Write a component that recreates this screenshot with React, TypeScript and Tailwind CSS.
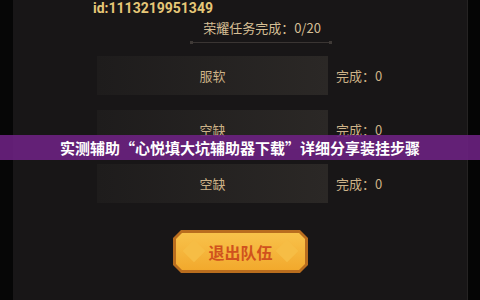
import React from "react";

const font = { fontFamily: '"Noto Sans CJK SC", "Noto Sans", sans-serif' };

function Row({ label, top }: { label: string; top: string }) {
  return (
    <div className={`flex items-center ${top}`}>
      <div className="ml-[84px] w-[231px] h-[39px] flex items-center justify-center bg-gradient-to-r from-[#1e1c1c] to-[#2b2826] text-[13px] text-[#cdb287] leading-none">
        {label}
      </div>
      <div className="ml-[8px] text-[13px] text-[#cdb287] leading-none">完成：0</div>
    </div>
  );
}

export default function App() {
  return (
    <div className="relative w-[480px] h-[300px] flex bg-black overflow-hidden" style={font}>
      <div className="w-[13px] h-full bg-[#060606]" />
      <div className="w-[455px] h-full bg-[#181617] flex flex-col border-r border-[#252323]">
        <div
          className="ml-[80px] h-[16px] leading-[16px] text-[14px] font-bold text-[#e6c777]"
          style={{ fontFamily: 'Roboto, "Liberation Sans", sans-serif' }}
        >
          id:1113219951349
        </div>
        <div className="ml-[177px] w-[142px] flex flex-col items-center mt-[4px]">
          <div className="text-[13px] leading-[16px] text-[#d6bf95] pl-[2px]">荣耀任务完成：0/20</div>
          <div className="relative mt-[6px] w-full h-[1px] bg-[#3a3533]">
            <div className="absolute left-0 top-[-1px] w-[3px] h-[3px] bg-[#3f3a37]" />
            <div className="absolute right-0 top-[-1px] w-[3px] h-[3px] bg-[#3f3a37]" />
          </div>
        </div>
        <Row label="服软" top="mt-[13px]" />
        <Row label="空缺" top="mt-[15px]" />
        <Row label="空缺" top="mt-[15px]" />
        <div className="ml-[160px] mt-[27px] w-[135px] h-[43px] bg-[#b96d1e] [clip-path:polygon(8px_0,calc(100%-8px)_0,100%_8px,100%_calc(100%-8px),calc(100%-8px)_100%,8px_100%,0_calc(100%-8px),0_8px)] p-[3px]">
          <div className="w-full h-full bg-gradient-to-b from-[#f8c24a] to-[#f2a92c] [clip-path:polygon(6px_0,calc(100%-6px)_0,100%_6px,100%_calc(100%-6px),calc(100%-6px)_100%,6px_100%,0_calc(100%-6px),0_6px)] flex items-center justify-center relative">
            <div className="absolute left-[10px] top-[10px] w-[16px] h-[16px] rotate-45 bg-[#f6bd45]" />
            <div className="absolute right-[10px] top-[10px] w-[16px] h-[16px] rotate-45 bg-[#f6bd45]" />
            <span className="relative text-[16px] font-bold text-[#d0521d] leading-none">退出队伍</span>
          </div>
        </div>
      </div>
      <div className="w-[12px] h-full bg-[#050505]" />
      <div className="absolute left-0 top-[135px] w-[480px] h-[25px] bg-[#6c2181]/90 flex items-center justify-center">
        <span className="text-[15px] font-bold text-white leading-none">
          实测辅助“心悦填大坑辅助器下载”详细分享装挂步骤
        </span>
      </div>
    </div>
  );
}
